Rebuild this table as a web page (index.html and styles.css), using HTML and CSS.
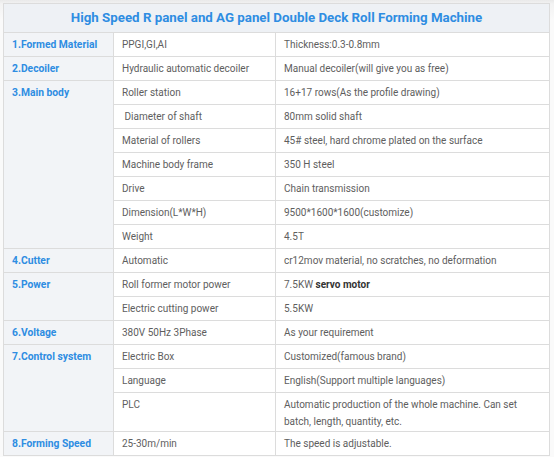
FILE: index.html
```html
<!DOCTYPE html>
<html>
<head>
<meta charset="utf-8">
<link rel="stylesheet" href="styles.css">
</head>
<body>
<div class="frame">
<table class="spec">
  <colgroup>
    <col class="c1"><col class="c2"><col class="c3">
  </colgroup>
  <thead>
    <tr><th colspan="3" class="title">High Speed R panel and AG panel Double Deck Roll Forming Machine</th></tr>
  </thead>
  <tbody>
    <tr><td class="k">1.Formed Material</td><td>PPGI,GI,AI</td><td>Thickness:0.3-0.8mm</td></tr>
    <tr><td class="k">2.Decoiler</td><td>Hydraulic automatic decoiler</td><td>Manual decoiler(will give you as free)</td></tr>
    <tr><td class="k" rowspan="7">3.Main body</td><td>Roller station</td><td>16+17 rows(As the profile drawing)</td></tr>
    <tr><td>&nbsp;Diameter of shaft</td><td>80mm solid shaft</td></tr>
    <tr><td>Material of rollers</td><td>45# steel, hard chrome plated on the surface</td></tr>
    <tr><td>Machine body frame</td><td>350 H steel</td></tr>
    <tr><td>Drive</td><td>Chain transmission</td></tr>
    <tr><td>Dimension(L*W*H)</td><td>9500*1600*1600(customize)</td></tr>
    <tr><td>Weight</td><td>4.5T</td></tr>
    <tr><td class="k">4.Cutter</td><td>Automatic</td><td>cr12mov material, no scratches, no deformation</td></tr>
    <tr><td class="k" rowspan="2">5.Power</td><td>Roll former motor power</td><td>7.5KW <b>servo motor</b></td></tr>
    <tr><td>Electric cutting power</td><td>5.5KW</td></tr>
    <tr><td class="k">6.Voltage</td><td>380V 50Hz 3Phase</td><td>As your requirement</td></tr>
    <tr><td class="k" rowspan="3">7.Control system</td><td>Electric Box</td><td>Customized(famous brand)</td></tr>
    <tr><td>Language</td><td>English(Support multiple languages)</td></tr>
    <tr><td>PLC</td><td class="wrap">Automatic production of the whole machine. Can set batch, length, quantity, etc.</td></tr>
    <tr><td class="k">8.Forming Speed</td><td>25-30m/min</td><td>The speed is adjustable.</td></tr>
  </tbody>
</table>
</div>
</body>
</html>
```

FILE: styles.css
```css
html, body {
  margin: 0;
  padding: 0;
  background: #ffffff;
}
.frame {
  width: 554px;
  height: 457px;
  box-sizing: border-box;
  padding: 3px 4px 0 3px;
  background: linear-gradient(#e9e9e9, #f3f3f3 4px, #fafafa 20px);
  overflow: hidden;
}
.spec {
  width: 547px;
  border-collapse: collapse;
  font-family: Roboto, "Liberation Sans", sans-serif;
  font-size: 10px;
  color: #5e5e5e;
  background: #fff;
  border: 1px solid #d9d9d9;
}
.c1 { width: 110px; }
.c2 { width: 162px; }
.spec td, .spec th {
  border: 1px solid #dcdcdc;
  padding: 0 8px;
  height: 23px;
  vertical-align: top;
  line-height: 23px;
  text-align: left;
}
.spec th.title {
  background: #eef1f5;
  color: #2e8de2;
  font-size: 13.3px;
  font-weight: bold;
  text-align: center;
  height: 28px;
  line-height: 28px;
}
.spec td.k {
  background: #f2f4f7;
  color: #2e8de2;
  font-weight: bold;
  font-size: 10.3px;
}
.spec td.wrap {
  height: auto;
  line-height: 17px;
  padding-top: 3px;
  padding-bottom: 1px;
}
.spec b {
  color: #333;
}
```
